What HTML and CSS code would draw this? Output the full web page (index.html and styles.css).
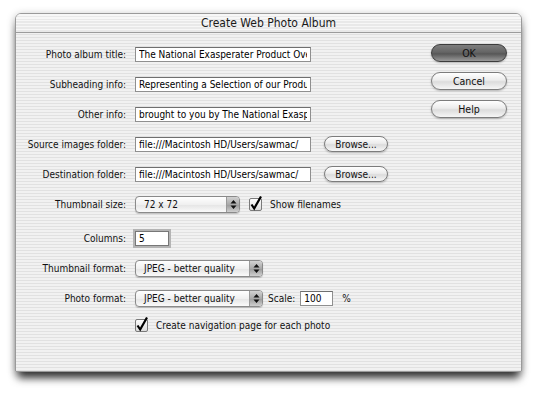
FILE: index.html
```html
<!DOCTYPE html>
<html lang="en">
<head>
  <meta charset="UTF-8" />
  <meta name="viewport" content="width=device-width, initial-scale=1.0" />
  <title>Create Web Photo Album</title>
  <link rel="stylesheet" href="styles.css">
</head>
<body>
  <div class="window">
    <div class="titlebar">Create Web Photo Album</div>
    <div class="content">
      <form class="form">
        <div class="row">
          <label class="label">Photo album title:</label>
          <input class="text text--wide" type="text" value="The National Exasperater Product Overview" />
        </div>
        <div class="row">
          <label class="label">Subheading info:</label>
          <input class="text text--wide" type="text" value="Representing a Selection of our Products" />
        </div>
        <div class="row">
          <label class="label">Other info:</label>
          <input class="text text--wide" type="text" value="brought to you by The National Exasperater" />
        </div>
        <div class="row">
          <label class="label">Source images folder:</label>
          <input class="text text--wide" type="text" value="file:///Macintosh HD/Users/sawmac/" />
          <button type="button" class="button button--small">Browse...</button>
        </div>
        <div class="row">
          <label class="label">Destination folder:</label>
          <input class="text text--wide" type="text" value="file:///Macintosh HD/Users/sawmac/" />
          <button type="button" class="button button--small">Browse...</button>
        </div>
        <div class="row">
          <label class="label">Thumbnail size:</label>
          <div class="popup popup--short">
            <span class="popup__value">72 x 72</span>
            <span class="popup__arrows">
              <svg width="7" height="11" viewBox="0 0 7 11"><path d="M3.5 1 L6.5 4.5 H0.5 Z M3.5 10 L6.5 6.5 H0.5 Z" fill="#111"/></svg>
            </span>
          </div>
          <span class="check">
            <span class="check__box">
              <svg width="14" height="15" viewBox="0 0 14 15"><path d="M2.5 8.5 L5.2 12.5 L12 0.5" fill="none" stroke="#000" stroke-width="2.2"/></svg>
            </span>
            Show filenames
          </span>
        </div>
        <div class="row row--columns">
          <label class="label">Columns:</label>
          <input class="text text--tiny text--focus" type="text" value="5" />
        </div>
        <div class="row">
          <label class="label">Thumbnail format:</label>
          <div class="popup">
            <span class="popup__value">JPEG - better quality</span>
            <span class="popup__arrows">
              <svg width="7" height="11" viewBox="0 0 7 11"><path d="M3.5 1 L6.5 4.5 H0.5 Z M3.5 10 L6.5 6.5 H0.5 Z" fill="#111"/></svg>
            </span>
          </div>
        </div>
        <div class="row">
          <label class="label">Photo format:</label>
          <div class="popup">
            <span class="popup__value">JPEG - better quality</span>
            <span class="popup__arrows">
              <svg width="7" height="11" viewBox="0 0 7 11"><path d="M3.5 1 L6.5 4.5 H0.5 Z M3.5 10 L6.5 6.5 H0.5 Z" fill="#111"/></svg>
            </span>
          </div>
          <span class="scale-label">Scale:</span>
          <input class="text text--tiny text--scale" type="text" value="100" />
          <span class="unit">%</span>
        </div>
        <div class="row row--nav">
          <span class="check">
            <span class="check__box">
              <svg width="14" height="15" viewBox="0 0 14 15"><path d="M2.5 8.5 L5.2 12.5 L12 0.5" fill="none" stroke="#000" stroke-width="2.2"/></svg>
            </span>
            Create navigation page for each photo
          </span>
        </div>
      </form>
      <div class="actions">
        <button type="button" class="button button--default">OK</button>
        <button type="button" class="button">Cancel</button>
        <button type="button" class="button">Help</button>
      </div>
    </div>
  </div>
</body>
</html>
```

FILE: styles.css
```css
:root {
  --stripe-light: #f1f1f1;
  --stripe-dark: #e1e1e1;
  --text-color: #111;
  --font: 'DejaVu Sans Condensed', 'DejaVu Sans', sans-serif;
}
* {
  box-sizing: border-box;
  margin: 0;
  padding: 0;
}
body {
  min-height: 100vh;
  background: #fff;
  font-family: var(--font);
  font-size: 10px;
  color: var(--text-color);
  padding: 13px 0 0 15px;
}
.window {
  width: 507px;
  height: 359px;
  border: 1px solid #9a9a9a;
  border-radius: 6px 6px 0 0;
  background: repeating-linear-gradient(var(--stripe-light) 0 1.5px, var(--stripe-dark) 1.5px 3px);
  box-shadow: 0 9px 9px -3px rgba(0, 0, 0, 0.75), 0 2px 8px rgba(0, 0, 0, 0.3);
  overflow: hidden;
}
.titlebar {
  height: 19px;
  border-bottom: 1px solid #9c9c9c;
  background: repeating-linear-gradient(#f7f7f7 0 1.5px, #e9e9e9 1.5px 3px);
  text-align: center;
  font-size: 12px;
  line-height: 18px;
  color: #1a1a1a;
}
.content {
  display: flex;
  justify-content: space-between;
}
.form {
  display: flex;
  flex-direction: column;
  gap: 14px;
  padding-top: 13px;
}
.row {
  display: flex;
  align-items: center;
  height: 16px;
}
.row--columns {
  margin-top: 4px;
}
.row--nav {
  margin-top: -3px;
  padding-left: 119px;
}
.label {
  width: 110px;
  margin-right: 9px;
  text-align: right;
  white-space: nowrap;
}
.text {
  height: 15px;
  border: 1px solid #8f8f8f;
  border-top-color: #6f6f6f;
  background: #fff;
  font-family: var(--font);
  font-size: 10px;
  color: #000;
  padding: 0 3px;
  outline: none;
}
.text--wide {
  width: 176px;
}
.text--tiny {
  width: 34px;
}
.text--focus {
  border: 1px solid #777;
  box-shadow: 0 0 0 2px #b4b4b4;
}
.text--scale {
  width: 33px;
  margin-left: 5px;
}
.button {
  width: 76px;
  height: 18px;
  border: 1px solid #7c7c7c;
  border-radius: 9px;
  background: linear-gradient(#ffffff 0%, #ececec 45%, #dcdcdc 55%, #f6f6f6 100%);
  font-family: var(--font);
  font-size: 10.5px;
  color: #111;
  box-shadow: 0 1px 2px rgba(0, 0, 0, 0.25);
}
.button--default {
  border-color: #3c3c3c;
  background: linear-gradient(#7e7e7e 0%, #656565 45%, #575757 55%, #999 100%);
}
.button--small {
  width: 64px;
  height: 16px;
  margin-left: 13px;
  font-size: 10px;
}
.actions {
  display: flex;
  flex-direction: column;
  gap: 10px;
  padding: 11px 14px 0 0;
}
.popup {
  display: flex;
  align-items: stretch;
  width: 128px;
  height: 17px;
  border: 1px solid #8a8a8a;
  border-radius: 4px;
  background: linear-gradient(#ffffff, #f0f0f0 50%, #e4e4e4 51%, #fafafa);
  box-shadow: 0 1px 1px rgba(0, 0, 0, 0.2);
  overflow: hidden;
}
.popup--short {
  width: 105px;
}
.popup__value {
  flex: 1;
  padding-left: 8px;
  line-height: 15px;
  white-space: nowrap;
}
.popup__arrows {
  width: 13px;
  display: flex;
  align-items: center;
  justify-content: center;
  border-left: 1px solid #9a9a9a;
  background: linear-gradient(#d2d2d2, #a9a9a9 50%, #999 51%, #cfcfcf);
}
.check {
  display: flex;
  align-items: center;
  gap: 8px;
  margin-left: 9px;
  white-space: nowrap;
}
.row--nav .check {
  margin-left: 0;
}
.check__box {
  position: relative;
  width: 13px;
  height: 13px;
  border: 1px solid #7a7a7a;
  border-radius: 2px;
  background: linear-gradient(#fdfdfd, #dcdcdc);
}
.check__box svg {
  position: absolute;
  left: -1px;
  top: -3px;
}
.scale-label {
  margin-left: 5px;
}
.unit {
  margin-left: 9px;
}
```
